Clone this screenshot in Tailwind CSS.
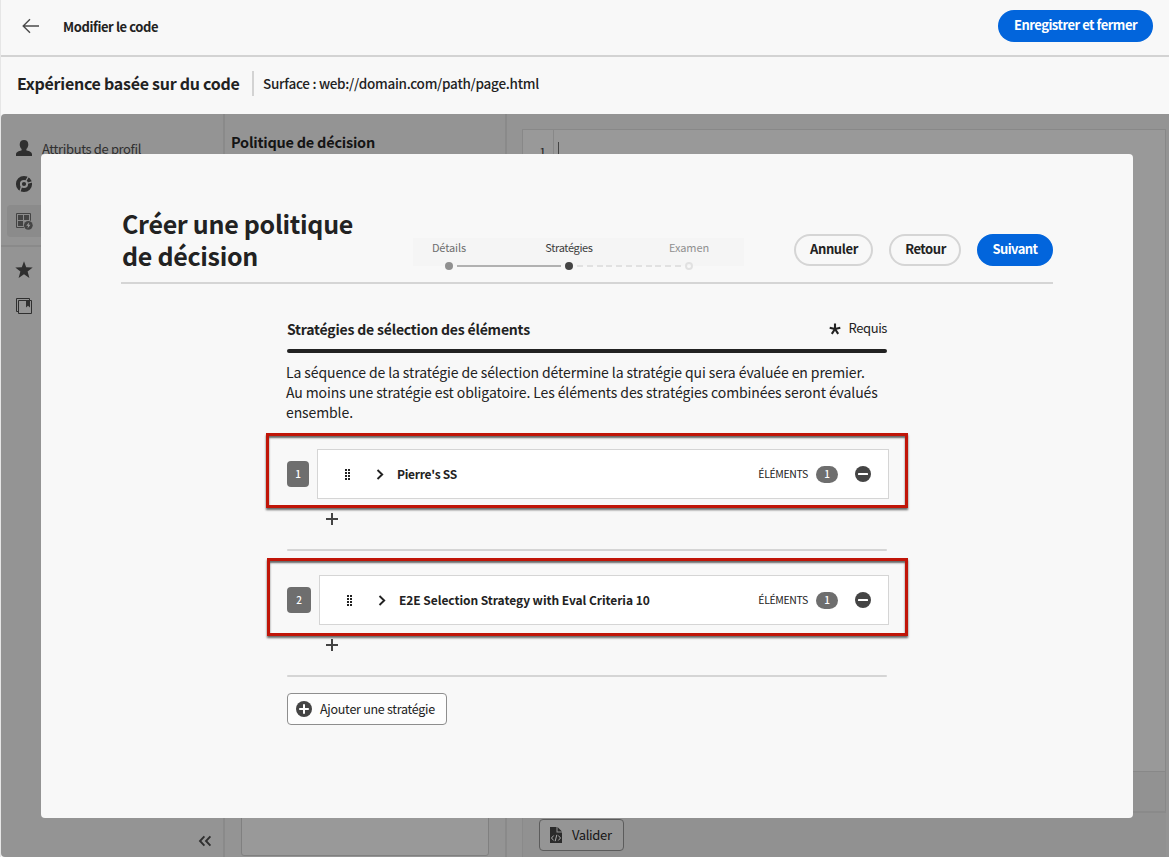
<!DOCTYPE html>
<html lang="fr">
<head>
<meta charset="utf-8">
<title>Modifier le code</title>
<script src="https://cdn.jsdelivr.net/npm/@tailwindcss/browser@4"></script>
</head>
<body class="w-[1169px] h-[857px] overflow-hidden bg-[#f8f8f8] text-[#222] font-['Noto_Sans_CJK_SC','Noto_Sans',sans-serif]">
<div class="relative flex h-[857px] flex-col border-l border-[#e6e6e6]">

  <header class="flex h-[57px] shrink-0 items-center border-b-2 border-[#d3d3d3] pl-[21px] pr-4">
    <svg class="-mt-1 h-[18px] w-[18px]" viewBox="0 0 18 18" fill="none" stroke="#4b4b4b" stroke-width="1.4"><path d="M17 9H1.2M8 2.2 1.2 9 8 15.8"/></svg>
    <h1 class="ml-[23px] -mt-[2px] text-[13px] font-bold tracking-[-0.4px]">Modifier le code</h1>
    <button class="-mt-[3px] ml-auto h-8 w-[155px] rounded-full bg-[#0265dc] pb-[2px] text-[13px] font-bold leading-[30px] tracking-[-0.5px] text-white">Enregistrer et fermer</button>
  </header>

  <div class="flex h-[57px] shrink-0 items-center pb-1 pl-4">
    <h2 class="-mt-[2px] w-[235px] text-[16px] font-bold leading-6 tracking-[-0.27px]">Expérience basée sur du code</h2>
    <div class="h-[25px] w-[2px] bg-[#d3d3d3]"></div>
    <p class="-mt-[2px] ml-[9px] text-[13.5px] font-medium leading-6 tracking-[-0.27px]">Surface : web://domain.com/path/page.html</p>
  </div>

  <div class="flex h-[743px] overflow-hidden rounded-l-[4px] bg-[#949494]">
    <aside class="flex w-[224px] shrink-0 flex-col border-r-2 border-[#8a8a8a] text-[#2f2f2f]">
      <div class="mt-[25px] flex h-[18px] items-center pl-[14px]">
        <svg class="h-[18px] w-[18px]" viewBox="0 0 18 18" fill="currentColor"><path d="M17 15.4c0-2.2-3-3.3-5.2-3.8-.5-.1-.6-1.4-.2-1.9 1.1-1.1 1.7-2.6 1.7-4.3C13.300 2.500 11.500 1 9 1S4.700 2.500 4.700 5.400c0 1.700.6 3.200 1.700 4.300.4.5.3 1.800-.2 1.900C4 12.100 1 13.200 1 15.400V17h16z"/></svg>
        <span class="ml-[9px] mt-[2px] text-[13px] tracking-[-0.37px]">Attributs de profil</span>
      </div>
      <div class="mt-[18px] pl-[14px]">
        <svg class="h-[18px] w-[18px]" viewBox="0 0 18 18" fill="none"><circle cx="9" cy="9" r="6.100" stroke="currentColor" stroke-width="4"/><circle cx="9" cy="9" r="2.100" fill="currentColor"/><path d="M10.800 6 14 .5M12 8.300 18 6.500M6.500 11.500 4.500 18" stroke="#949494" stroke-width="1.300"/></svg>
      </div>
      <div class="ml-[6px] mt-3 flex h-8 items-center rounded-[4px] bg-[#8b8b8b] pb-px pl-2">
        <svg class="h-[18px] w-[18px]" viewBox="0 0 18 18"><path d="M1.500 15.500v-14h14v14z" fill="none" stroke="#444"/><path d="M3 3h5v5H3zM9 3h5v5H9zM3 9h5v5H3z" fill="#444"/><circle cx="13.300" cy="13.300" r="5" fill="#8b8b8b"/><circle cx="13.300" cy="13.300" r="4.400" fill="#444"/><path d="m14.200 10.200-3 3.600h1.900l-.6 2.700 3-3.700h-1.900z" fill="#999"/></svg>
      </div>
      <div class="mt-2 h-[2px] bg-[#8a8a8a]"></div>
      <div class="mt-[14px] pl-[14px]">
        <svg class="h-[18px] w-[18px]" viewBox="0 0 18 18" fill="currentColor"><path d="m9 .3 2.200 6 6.500.3-5.100 4 1.800 6.300L9 13.300l-5.400 3.600 1.800-6.300-5.100-4 6.500-.3z"/></svg>
      </div>
      <div class="mt-[18px] pl-[14px]">
        <svg class="h-[18px] w-[18px]" viewBox="0 0 18 18"><path d="M3 14.500H1.500v-13h13V3M3.500 3.500h13v13h-13z" fill="none" stroke="currentColor"/><path d="M11 3.500h4v7l-2-1.700-2 1.700z" fill="currentColor"/></svg>
      </div>
      <svg class="mb-[10px] ml-auto mr-[11px] mt-auto h-3 w-[14px]" viewBox="0 0 14 12" fill="none" stroke="currentColor" stroke-width="1.900"><path d="M6.400 1.300 2 6l4.400 4.700M12.400 1.300 8 6l4.400 4.700"/></svg>
    </aside>

    <section class="flex w-[282px] shrink-0 flex-col border-r-2 border-[#8a8a8a]">
      <h3 class="pl-[6px] pt-4 text-[14.5px] font-bold leading-6 tracking-[-0.24px] text-[#151515]">Politique de décision</h3>
      <div class="mb-px ml-4 mt-[41px] w-[248px] grow rounded-[3px] border border-[#808080] bg-[#999]"></div>
    </section>

    <section class="flex grow flex-col pl-[15px] pt-[15px]">
      <div class="flex h-[643px] w-[644px] border border-[#888] bg-[#999]">
        <div class="w-[31px] border-r border-[#888] pr-[7px] pt-3 text-right text-[12px] leading-5 text-[#222]">1</div>
        <div class="ml-1 mt-3 h-[18px] w-px bg-[#444]"></div>
      </div>
      <div class="h-[39px] w-[644px] border-r border-[#888] bg-[#929292]"></div>
      <div class="h-[2px] w-[644px] bg-[#8a8a8a]"></div>
      <div class="flex h-11 w-[644px] border-l border-[#8a8a8a] bg-[#919191] pl-4 pt-[6px]">
        <button class="flex h-8 w-[85px] items-center rounded-[4px] border border-[#5c5c5c] bg-[#959595] pl-[9px] text-[13px] tracking-[-0.35px] text-[#151515]">
          <svg class="h-4 w-[14px]" viewBox="0 0 14 16"><path d="M1 0h6.500v5.500H13V16H1zM8.500 0 13 4.500H8.500z" fill="#2b2b2b"/><path d="M4.700 8.500 2.500 11l2.200 2.500M9.300 8.500l2.200 2.500-2.200 2.500M7.800 7.800l-1.600 6.400" fill="none" stroke="#aaa" stroke-width="1"/></svg>
          <span class="ml-[9px]">Valider</span>
        </button>
      </div>
    </section>
  </div>

  <div role="dialog" class="absolute left-10 top-[154px] h-[664px] w-[1092px] rounded-[4px] bg-[#f8f8f8] pt-[53px]">
    <div class="ml-20 flex h-[77px] w-[932px] items-start border-b-2 border-[#d5d5d5]">
      <h2 class="w-[292px] pl-px text-[25px] font-bold leading-8 tracking-[-0.3px]">Créer une politique<br>de décision</h2>
      <div class="mt-[31px] h-7 w-[331px] bg-[#f5f5f5]">
        <div class="-ml-6 flex h-8 w-[360px] text-center text-[11px] leading-[18px]">
          <div class="w-[120px] text-[#6e6e6e] tracking-[-0.1px]">Détails</div>
          <div class="w-[120px] text-[#3d3d3d] tracking-[-0.35px]">Stratégies</div>
          <div class="w-[120px] text-[#909090] tracking-[-0.1px]">Examen</div>
        </div>
        <div class="-mt-2 ml-8 flex h-2 w-[248px] items-center">
          <div class="h-2 w-2 rounded-full bg-[#909090]"></div>
          <div class="mx-1 h-[2px] w-[104px] bg-[#b1b1b1]"></div>
          <div class="h-2 w-2 rounded-full bg-[#444]"></div>
          <div class="mx-1 h-[2px] w-[104px] bg-[repeating-linear-gradient(90deg,#e1e1e1_0_6px,transparent_6px_9.8px)]"></div>
          <div class="h-2 w-2 rounded-full border-2 border-[#e1e1e1]"></div>
        </div>
      </div>
      <div class="ml-[50px] mt-[27px] flex gap-4 text-[13px] font-bold">
        <button class="h-8 w-[79px] rounded-full border-2 border-[#d5d5d5] pb-[2px] pl-px leading-[26px] tracking-[-0.37px]">Annuler</button>
        <button class="h-8 w-[72px] rounded-full border-2 border-[#d5d5d5] pb-[2px] pl-px leading-[26px] tracking-[-0.45px]">Retour</button>
        <button class="h-8 w-[76px] rounded-full border-2 border-[#0265dc] bg-[#0265dc] pb-[2px] leading-[26px] tracking-[-0.57px] text-white">Suivant</button>
      </div>
    </div>

    <div class="ml-[246px] w-[600px] pt-[33px]">
      <div class="flex h-6 items-center justify-between">
        <h3 class="text-[14px] font-bold leading-6 tracking-[-0.19px]">Stratégies de sélection des éléments</h3>
        <div class="flex items-center text-[13px] leading-6 tracking-[-0.4px]">
          <svg class="mr-[7px] h-3 w-3" viewBox="0 0 12 12" stroke="#222" stroke-width="2.100"><path d="M6 6V.5M6 6l5.300-1.300M6 6l3.200 4.800M6 6l-3.200 4.800M6 6 .7 4.700"/></svg>
          <span class="-mt-[2px]">Requis</span>
        </div>
      </div>
      <div class="mt-2 h-1 rounded-full bg-[#222]"></div>
      <p class="-ml-px mt-[9px] whitespace-nowrap text-[14px] leading-5 tracking-[-0.1px]">La séquence de la stratégie de sélection détermine la stratégie qui sera évaluée en premier.<br>Au moins une stratégie est obligatoire. Les éléments des stratégies combinées seront évalués<br>ensemble.</p>

      <div class="-ml-[21px] mt-[11px] flex h-[75px] w-[642px] items-start gap-2 border-[3px] border-[#c01508] pl-[18px] pt-[13px] shadow-[0_2px_2px_#666,inset_0_2px_2px_#666]">
        <div class="mt-3 h-[26px] w-[22px] rounded-[4px] bg-[#6e6e6e] text-center text-[10px] font-medium leading-[26px] text-white">1</div>
        <div class="flex h-[50px] w-[572px] items-center border border-[#d5d5d5] bg-white pl-[27px] pr-[17px]">
          <svg class="h-[11px] w-[5px]" viewBox="0 0 5 11" fill="#222"><path d="M0 0h2v2H0zM3 0h2v2H3zM0 3h2v2H0zM3 3h2v2H3zM0 6h2v2H0zM3 6h2v2H3zM0 9h2v2H0zM3 9h2v2H3z"/></svg>
          <svg class="ml-[26px] h-[11px] w-2" viewBox="0 0 8 11" fill="none" stroke="#222" stroke-width="1.900"><path d="m1.500 1 4.700 4.500L1.500 10"/></svg>
          <span class="ml-[13px] text-[12px] font-bold tracking-[-0.27px]">Pierre's SS</span>
          <span class="-mt-px ml-auto text-[10.5px] tracking-[-0.35px]">ÉLÉMENTS</span>
          <span class="ml-2 h-[17px] w-[22px] rounded-full bg-[#6e6e6e] text-center text-[10px] font-medium leading-4 text-white">1</span>
          <svg class="ml-[17px] h-4 w-4" viewBox="0 0 16 16"><circle cx="8" cy="8" r="8" fill="#444"/><rect x="3" y="7" width="10" height="2" rx=".6" fill="#fff"/></svg>
        </div>
      </div>
      <div class="flex h-[41px] pl-[39px] pt-[5px]">
        <svg class="h-3 w-3" viewBox="0 0 12 12" fill="#444"><path d="M5 0h2v5h5v2H7v5H5V7H0V5h5z"/></svg>
      </div>
      <div class="h-[2px] rounded-full bg-[#d5d5d5]"></div>

      <div class="-ml-5 mt-[7px] flex h-[78px] w-[641px] items-start gap-2 border-[3px] border-[#c01508] pl-[17px] pt-[14px] shadow-[0_2px_2px_#666,inset_0_2px_2px_#666]">
        <div class="mt-3 h-[26px] w-6 rounded-[4px] bg-[#6e6e6e] text-center text-[10px] font-medium leading-[26px] text-white">2</div>
        <div class="flex h-[50px] w-[570px] items-center border border-[#d5d5d5] bg-white pl-[27px] pr-[17px]">
          <svg class="h-[11px] w-[5px]" viewBox="0 0 5 11" fill="#222"><path d="M0 0h2v2H0zM3 0h2v2H3zM0 3h2v2H0zM3 3h2v2H3zM0 6h2v2H0zM3 6h2v2H3zM0 9h2v2H0zM3 9h2v2H3z"/></svg>
          <svg class="ml-[26px] h-[11px] w-2" viewBox="0 0 8 11" fill="none" stroke="#222" stroke-width="1.900"><path d="m1.500 1 4.700 4.500L1.500 10"/></svg>
          <span class="ml-[13px] text-[12px] font-bold tracking-[-0.06px]">E2E Selection Strategy with Eval Criteria 10</span>
          <span class="-mt-px ml-auto text-[10.5px] tracking-[-0.35px]">ÉLÉMENTS</span>
          <span class="ml-2 h-[17px] w-[22px] rounded-full bg-[#6e6e6e] text-center text-[10px] font-medium leading-4 text-white">1</span>
          <svg class="ml-[17px] h-4 w-4" viewBox="0 0 16 16"><circle cx="8" cy="8" r="8" fill="#444"/><rect x="3" y="7" width="10" height="2" rx=".6" fill="#fff"/></svg>
        </div>
      </div>
      <div class="flex h-[39px] pl-[39px] pt-[3px]">
        <svg class="h-3 w-3" viewBox="0 0 12 12" fill="#444"><path d="M5 0h2v5h5v2H7v5H5V7H0V5h5z"/></svg>
      </div>
      <div class="h-[2px] rounded-full bg-[#d5d5d5]"></div>

      <button class="mt-4 flex h-8 w-[160px] items-center rounded-[4px] border border-[#8e8e8e] bg-[#fdfdfd] pl-2 text-[12.5px] tracking-[-0.27px]">
        <svg class="h-4 w-4" viewBox="0 0 16 16"><circle cx="8" cy="8" r="8" fill="#444"/><path d="M7 3.200h2V7h3.800v2H9v3.800H7V9H3.200V7H7z" fill="#fff"/></svg>
        <span class="ml-2">Ajouter une stratégie</span>
      </button>
    </div>
  </div>
</div>
</body>
</html>
